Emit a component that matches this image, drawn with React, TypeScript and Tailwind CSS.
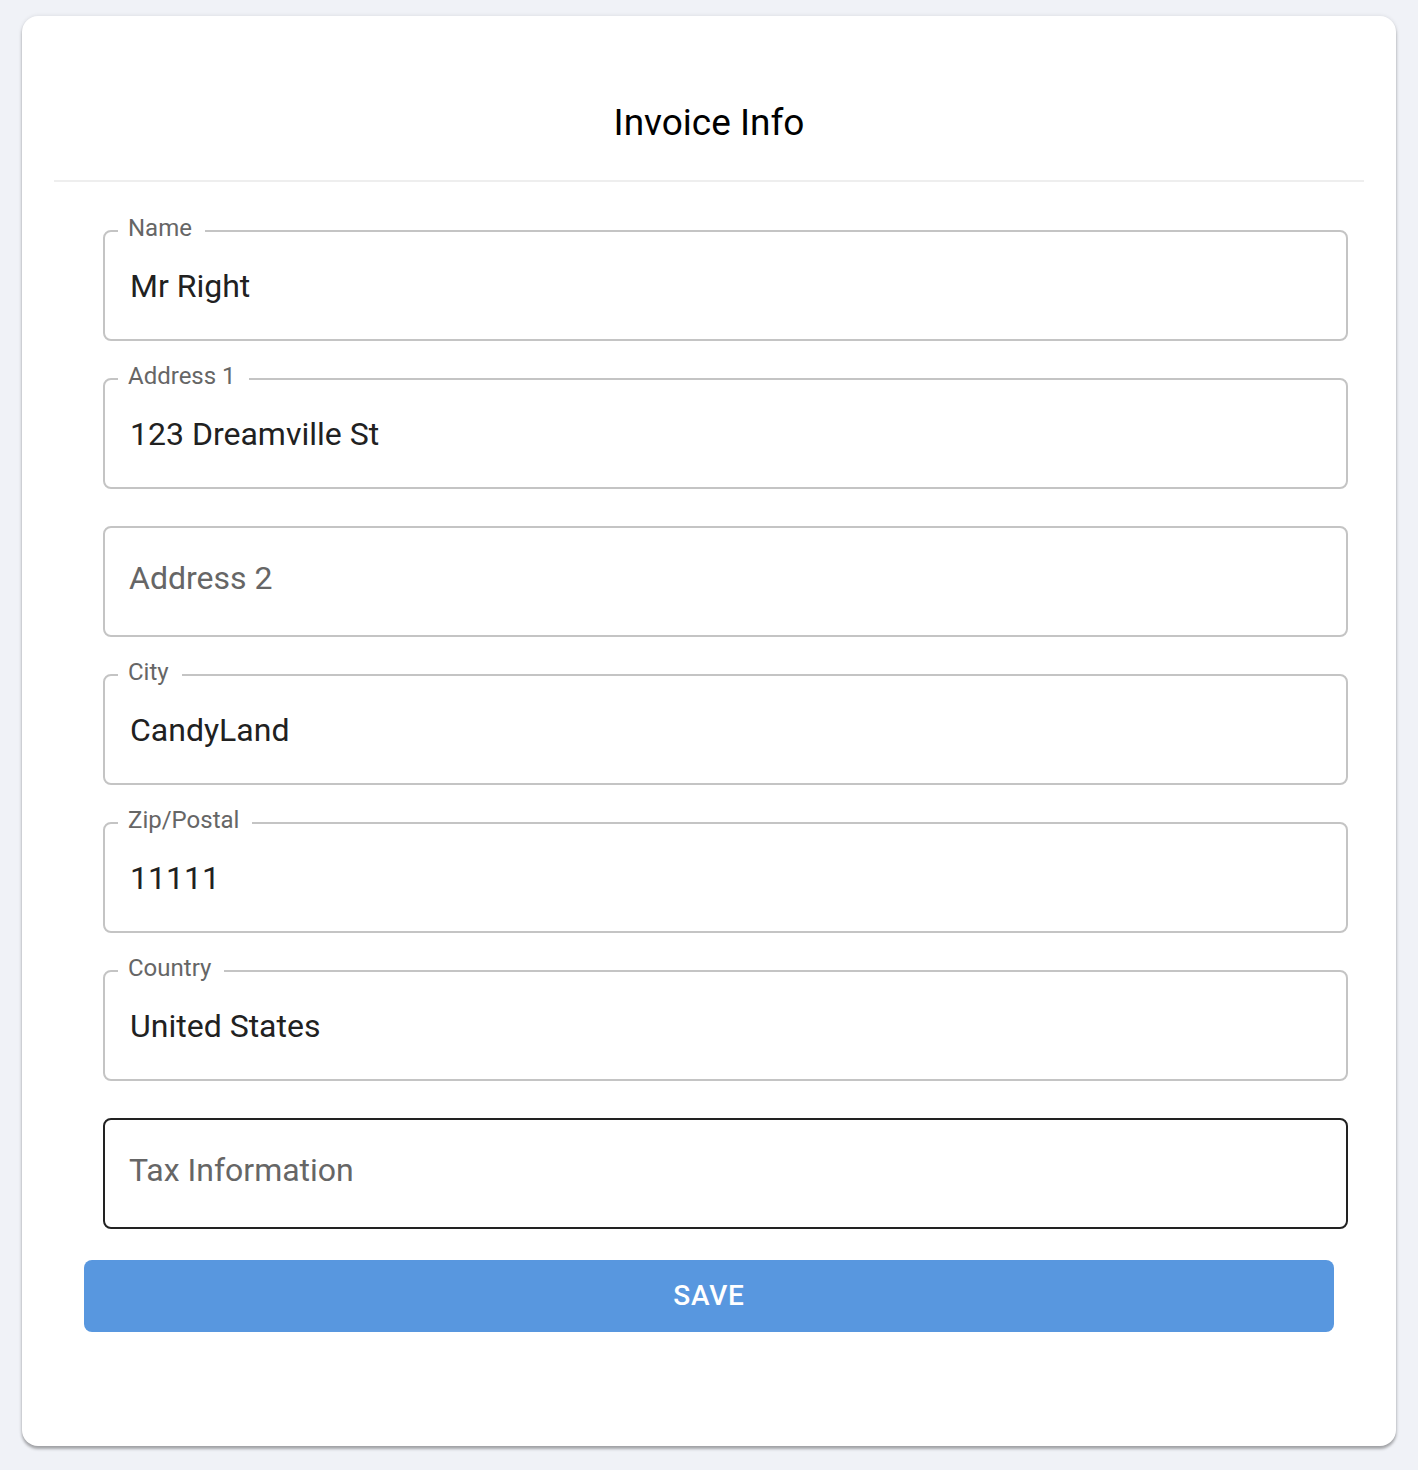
import React from 'react';

interface Field {
  label: string;
  value?: string;
  active?: boolean;
}

const fields: Field[] = [
  { label: 'Name', value: 'Mr Right' },
  { label: 'Address 1', value: '123 Dreamville St' },
  { label: 'Address 2' },
  { label: 'City', value: 'CandyLand' },
  { label: 'Zip/Postal', value: '11111' },
  { label: 'Country', value: 'United States' },
  { label: 'Tax Information', active: true },
];

function OutlinedField({ field }: { field: Field }) {
  const filled = !!field.value;
  return (
    <div
      className={`relative h-[111px] rounded-[8px] border-2 flex items-center ${
        field.active ? 'border-[#222222]' : 'border-[#c4c4c4]'
      }`}
    >
      {filled && (
        <span className="absolute left-[13px] top-[-16px] bg-white pl-[10px] pr-[13px] text-[24px] leading-[24px] text-[#666666]">
          {field.label}
        </span>
      )}
      {filled ? (
        <span className="pl-[25px] text-[32px] text-[#212121]">{field.value}</span>
      ) : (
        <span className="pl-[24px] pb-[7px] text-[32px] text-[#666666]">{field.label}</span>
      )}
    </div>
  );
}

export default function App() {
  return (
    <div
      className="min-h-screen bg-[#f0f2f7] px-[22px] pt-[16px] pb-[24px]"
      style={{ fontFamily: 'Roboto, "Liberation Sans", sans-serif' }}
    >
      <div className="bg-white rounded-[16px] shadow-[0_3px_3px_rgba(0,0,0,0.3),0_0_4px_rgba(0,0,0,0.1)] flex flex-col pb-[114px]">
        <h1 className="mt-[85px] text-center text-[37px] leading-[44px] font-normal text-black">
          Invoice Info
        </h1>
        <div className="mx-[32px] mt-[35px] h-[2px] bg-[#eeeeee]" />
        <form className="flex flex-col gap-[37px] ml-[81px] mr-[48px] mt-[48px]">
          {fields.map((f) => (
            <OutlinedField key={f.label} field={f} />
          ))}
        </form>
        <button
          type="button"
          className="mx-[62px] mt-[31px] h-[72px] rounded-[8px] bg-[#5897df] text-white text-[28px] font-medium tracking-[0.8px] uppercase"
        >
          Save
        </button>
      </div>
    </div>
  );
}
